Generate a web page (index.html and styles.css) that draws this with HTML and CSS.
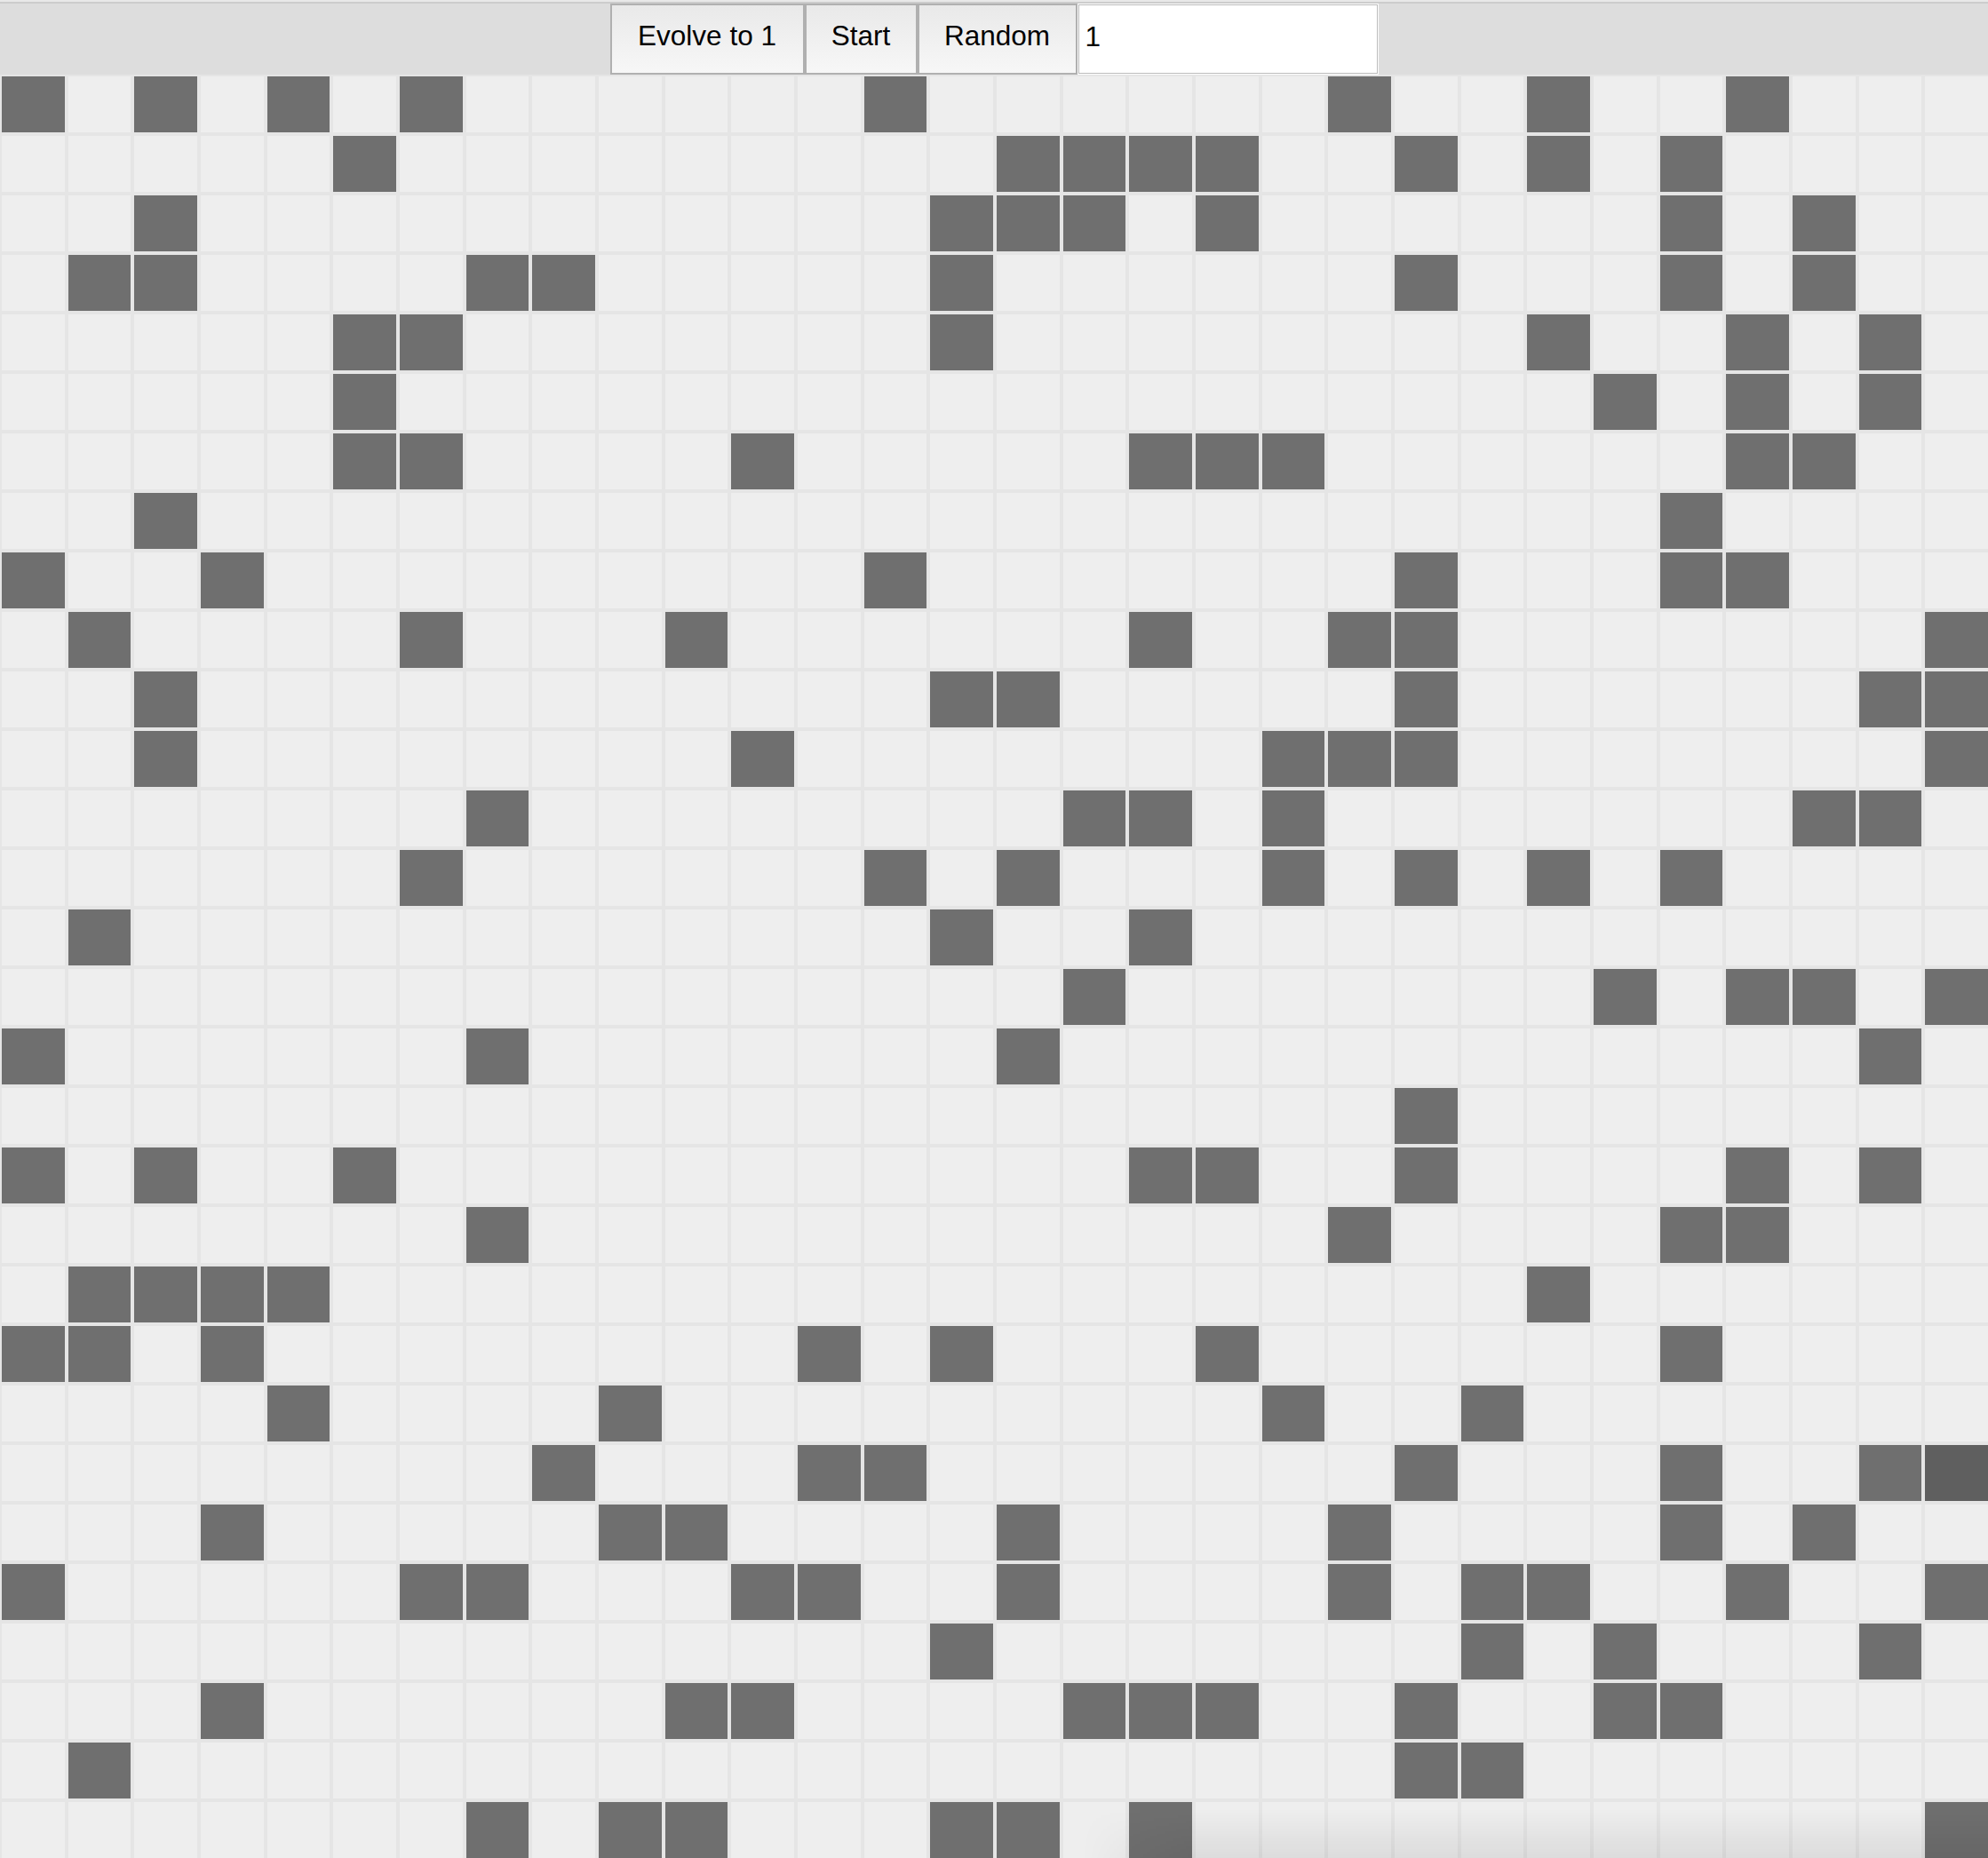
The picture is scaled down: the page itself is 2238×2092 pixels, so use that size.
FILE: index.html
```html
<!DOCTYPE html>
<html lang="en">

<head>
    <meta charset="UTF-8">
    <title>Evolve</title>
    <link rel="stylesheet" href="styles.css">
</head>

<body>

    <div class="toolbar">
        <button class="btn btn-evolve">Evolve to 1</button>
        <button class="btn btn-start">Start</button>
        <button class="btn btn-random">Random</button>
        <input class="generation" type="text" value="1">
    </div>

    <div class="board" id="board"></div>

    <div class="shade"></div>

    <script src="script.js"></script>
</body>

</html>
```

FILE: styles.css
```css
html,
body {
    margin: 0;
    height: 100%;
    overflow: hidden;
    background-color: #eee;
}

body {
    position: relative;
    font-family: "Liberation Sans", Arial, sans-serif;
}

.toolbar {
    display: flex;
    justify-content: center;
    align-items: flex-start;
    box-sizing: border-box;
    height: 84px;
    padding-top: 2px;
    background-color: #ddd;
    border-top: 2px solid #e8e8e8;
    box-shadow: inset 0 2px 0 #ccc;
}

.btn {
    box-sizing: border-box;
    height: 80px;
    margin: 0;
    border: 2px solid #b0b0b0;
    border-radius: 0;
    background: linear-gradient(#e9e9e9, #f7f7f7);
    color: #000;
    font-family: inherit;
    font-size: 31.5px;
    padding: 0 0 7px;
}

.btn-evolve {
    width: 219px;
}

.btn-start {
    width: 127px;
}

.btn-random {
    width: 180px;
}

.generation {
    box-sizing: border-box;
    width: 337px;
    height: 78px;
    margin: 1px 1px 0;
    padding: 0 7px 5px;
    border: 1px solid #bbb;
    border-radius: 0;
    box-shadow: 0 0 0 1px #fff;
    background-color: #fff;
    color: #000;
    font-family: inherit;
    font-size: 31.5px;
    outline: 0;
}

.board {
    display: grid;
    width: 2240px;
    grid-template-columns: repeat(30, 1fr);
    grid-auto-rows: 67px;
}

.cell {
    box-sizing: border-box;
    border: 2px solid #e5e5e5;
    background-color: #eee;
}

.cell.on {
    background-color: #6f6f6f;
}

.cell.hover {
    background-color: #5f5f5f;
}

/* soft shadow at the bottom right */
.shade {
    position: absolute;
    right: 0;
    bottom: 0;
    width: 1020px;
    height: 55px;
    background: linear-gradient(rgba(0, 0, 0, 0), rgba(0, 0, 0, 0.075));
    -webkit-mask-image: linear-gradient(to right, transparent, #000 130px);
    mask-image: linear-gradient(to right, transparent, #000 130px);
    pointer-events: none;
}
```

FILE: script.js
```js
// live cells per row
var rows = [
    [0, 2, 4, 6, 13, 20, 23, 26],
    [5, 15, 16, 17, 18, 21, 23, 25],
    [2, 14, 15, 16, 18, 25, 27],
    [1, 2, 7, 8, 14, 21, 25, 27],
    [5, 6, 14, 23, 26, 28],
    [5, 24, 26, 28],
    [5, 6, 11, 17, 18, 19, 26, 27],
    [2, 25],
    [0, 3, 13, 21, 25, 26],
    [1, 6, 10, 17, 20, 21, 29],
    [2, 14, 15, 21, 28, 29],
    [2, 11, 19, 20, 21, 29],
    [7, 16, 17, 19, 27, 28],
    [6, 13, 15, 19, 21, 23, 25],
    [1, 14, 17],
    [16, 24, 26, 27, 29],
    [0, 7, 15, 28],
    [21],
    [0, 2, 5, 17, 18, 21, 26, 28],
    [7, 20, 25, 26],
    [1, 2, 3, 4, 23],
    [0, 1, 3, 12, 14, 18, 25],
    [4, 9, 19, 22],
    [8, 12, 13, 21, 25, 28, 29],
    [3, 9, 10, 15, 20, 25, 27],
    [0, 6, 7, 11, 12, 15, 20, 22, 23, 26, 29],
    [14, 22, 24, 28],
    [3, 10, 11, 16, 17, 18, 21, 24, 25],
    [1, 21, 22],
    [7, 9, 10, 14, 15, 17, 29]
];

var board = document.getElementById('board');

rows.forEach(function (live, r) {
    for (var c = 0; c < 30; c++) {
        var cell = document.createElement('div');
        cell.className = 'cell';
        if (live.indexOf(c) !== -1) {
            cell.className += ' on';
        }
        // the pointer sits on this one
        if (r === 23 && c === 29) {
            cell.className += ' hover';
        }
        board.appendChild(cell);
    }
});
```
